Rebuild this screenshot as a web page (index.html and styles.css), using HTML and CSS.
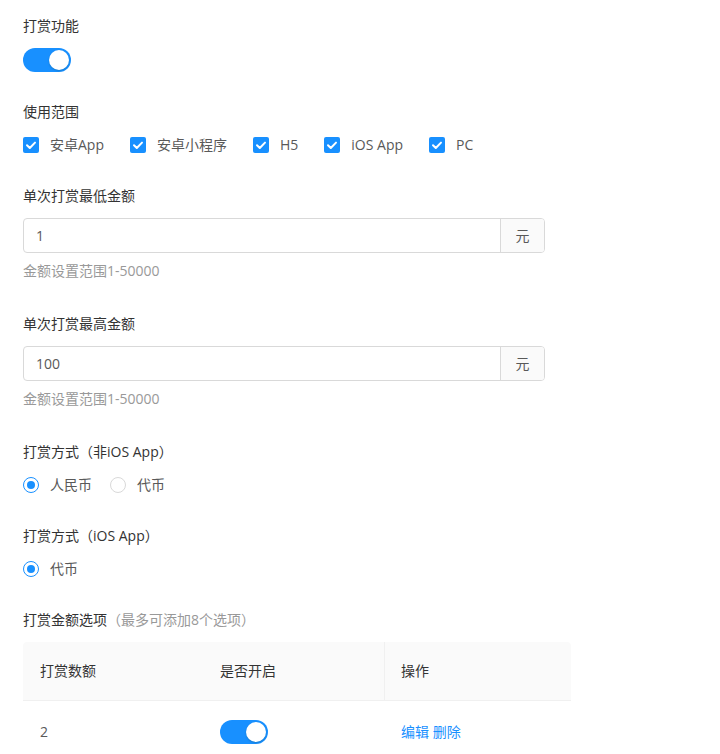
FILE: index.html
```html
<!DOCTYPE html>
<html lang="zh-CN">
<head>
<meta charset="utf-8">
<title>打赏设置</title>
<link rel="stylesheet" href="styles.css">
</head>
<body>
<div class="page">
  <div class="item">
    <div class="label">打赏功能</div>
    <span class="switch on"><span class="knob"></span></span>
  </div>

  <div class="item">
    <div class="label">使用范围</div>
    <div class="options">
      <label class="opt"><span class="cb"><svg viewBox="0 0 16 16" width="16" height="16"><path d="M4 8.2 L6.8 11 L12 5.6" fill="none" stroke="#fff" stroke-width="2" stroke-linecap="round" stroke-linejoin="round"/></svg></span>安卓App</label>
      <label class="opt"><span class="cb"><svg viewBox="0 0 16 16" width="16" height="16"><path d="M4 8.2 L6.8 11 L12 5.6" fill="none" stroke="#fff" stroke-width="2" stroke-linecap="round" stroke-linejoin="round"/></svg></span>安卓小程序</label>
      <label class="opt"><span class="cb"><svg viewBox="0 0 16 16" width="16" height="16"><path d="M4 8.2 L6.8 11 L12 5.6" fill="none" stroke="#fff" stroke-width="2" stroke-linecap="round" stroke-linejoin="round"/></svg></span>H5</label>
      <label class="opt"><span class="cb"><svg viewBox="0 0 16 16" width="16" height="16"><path d="M4 8.2 L6.8 11 L12 5.6" fill="none" stroke="#fff" stroke-width="2" stroke-linecap="round" stroke-linejoin="round"/></svg></span>iOS App</label>
      <label class="opt"><span class="cb"><svg viewBox="0 0 16 16" width="16" height="16"><path d="M4 8.2 L6.8 11 L12 5.6" fill="none" stroke="#fff" stroke-width="2" stroke-linecap="round" stroke-linejoin="round"/></svg></span>PC</label>
    </div>
  </div>

  <div class="item with-help">
    <div class="label">单次打赏最低金额</div>
    <div class="input-group">
      <div class="input">1</div>
      <div class="addon">元</div>
    </div>
    <div class="help">金额设置范围1-50000</div>
  </div>

  <div class="item with-help">
    <div class="label">单次打赏最高金额</div>
    <div class="input-group">
      <div class="input">100</div>
      <div class="addon">元</div>
    </div>
    <div class="help">金额设置范围1-50000</div>
  </div>

  <div class="item">
    <div class="label">打赏方式（非iOS App）</div>
    <div class="options radios">
      <label class="opt"><span class="radio checked"></span>人民币</label>
      <label class="opt"><span class="radio"></span>代币</label>
    </div>
  </div>

  <div class="item">
    <div class="label">打赏方式（iOS App）</div>
    <div class="options radios">
      <label class="opt"><span class="radio checked"></span>代币</label>
    </div>
  </div>

  <div class="item">
    <div class="label">打赏金额选项<span class="sub">（最多可添加8个选项）</span></div>
    <div class="table">
      <div class="tr thead">
        <div class="td c1">打赏数额</div>
        <div class="td c2">是否开启</div>
        <div class="td c3 sep">操作</div>
      </div>
      <div class="tr tbody">
        <div class="td c1">2</div>
        <div class="td c2"><span class="switch on"><span class="knob"></span></span></div>
        <div class="td c3"><a class="link">编辑</a> <a class="link">删除</a></div>
      </div>
    </div>
  </div>
</div>
</body>
</html>
```

FILE: styles.css
```css
html, body {
  margin: 0;
  padding: 0;
  background: #fff;
}
body {
  font-family: "Open Sans", "Noto Sans CJK SC", sans-serif;
  font-size: 14px;
  line-height: 22px;
  color: #333;
}
.page {
  padding: 15px 23px 0 23px;
  width: 548px;
}
.item {
  margin-bottom: 29px;
}
.item.with-help {
  margin-bottom: 31px;
}
.label {
  color: #333;
  margin-bottom: 11px;
}
.label .sub {
  color: #999;
}
.switch {
  display: inline-flex;
  align-items: center;
  justify-content: flex-end;
  box-sizing: border-box;
  width: 48px;
  height: 24px;
  border-radius: 12px;
  background: #1890ff;
  padding: 2px;
  vertical-align: middle;
}
.switch .knob {
  width: 20px;
  height: 20px;
  border-radius: 50%;
  background: #fff;
  box-shadow: 0 1px 2px rgba(0, 35, 11, 0.2);
}
.options {
  display: flex;
  align-items: center;
  height: 22px;
}
.opt {
  display: inline-flex;
  align-items: center;
  color: #595959;
  margin-right: 26px;
}
.radios .opt {
  margin-right: 18px;
}
.cb {
  display: inline-block;
  width: 16px;
  height: 16px;
  border-radius: 2px;
  background: #1890ff;
  margin-right: 11px;
}
.cb svg {
  display: block;
}
.radio {
  display: inline-block;
  box-sizing: border-box;
  width: 16px;
  height: 16px;
  border-radius: 50%;
  border: 1px solid #d9d9d9;
  background: #fff;
  margin-right: 11px;
  position: relative;
}
.radio.checked {
  border-color: #1890ff;
}
.radio.checked::after {
  content: "";
  position: absolute;
  left: 3px;
  top: 3px;
  width: 8px;
  height: 8px;
  border-radius: 50%;
  background: #1890ff;
}
.input-group {
  display: flex;
  width: 522px;
  height: 35px;
  box-sizing: border-box;
  border: 1px solid #d9d9d9;
  border-radius: 4px;
}
.input {
  flex: 1;
  padding: 0 12px;
  line-height: 33px;
  color: #595959;
}
.addon {
  width: 43px;
  text-align: center;
  line-height: 33px;
  background: #fafafa;
  border-left: 1px solid #d9d9d9;
  border-radius: 0 3px 3px 0;
  color: #595959;
}
.help {
  color: #999;
  margin-top: 7px;
}
.table {
  width: 548px;
}
.tr {
  display: flex;
}
.thead {
  background: #fafafa;
  border-bottom: 1px solid #f0f0f0;
  border-radius: 4px 4px 0 0;
  height: 58px;
  align-items: center;
}
.tbody {
  height: 62px;
  align-items: center;
}
.td {
  box-sizing: border-box;
  padding: 0 17px;
  color: #333;
}
.tbody .td {
  color: #595959;
}
.c1 { width: 180px; }
.c2 { width: 181px; }
.c3 { flex: 1; }
.thead .sep {
  position: relative;
}
.thead .sep::before {
  content: "";
  position: absolute;
  left: 0;
  top: 0;
  bottom: 0;
  width: 1px;
  background: #f0f0f0;
}
.thead .td {
  line-height: 58px;
}
.link {
  color: #1890ff;
  text-decoration: none;
}
```
